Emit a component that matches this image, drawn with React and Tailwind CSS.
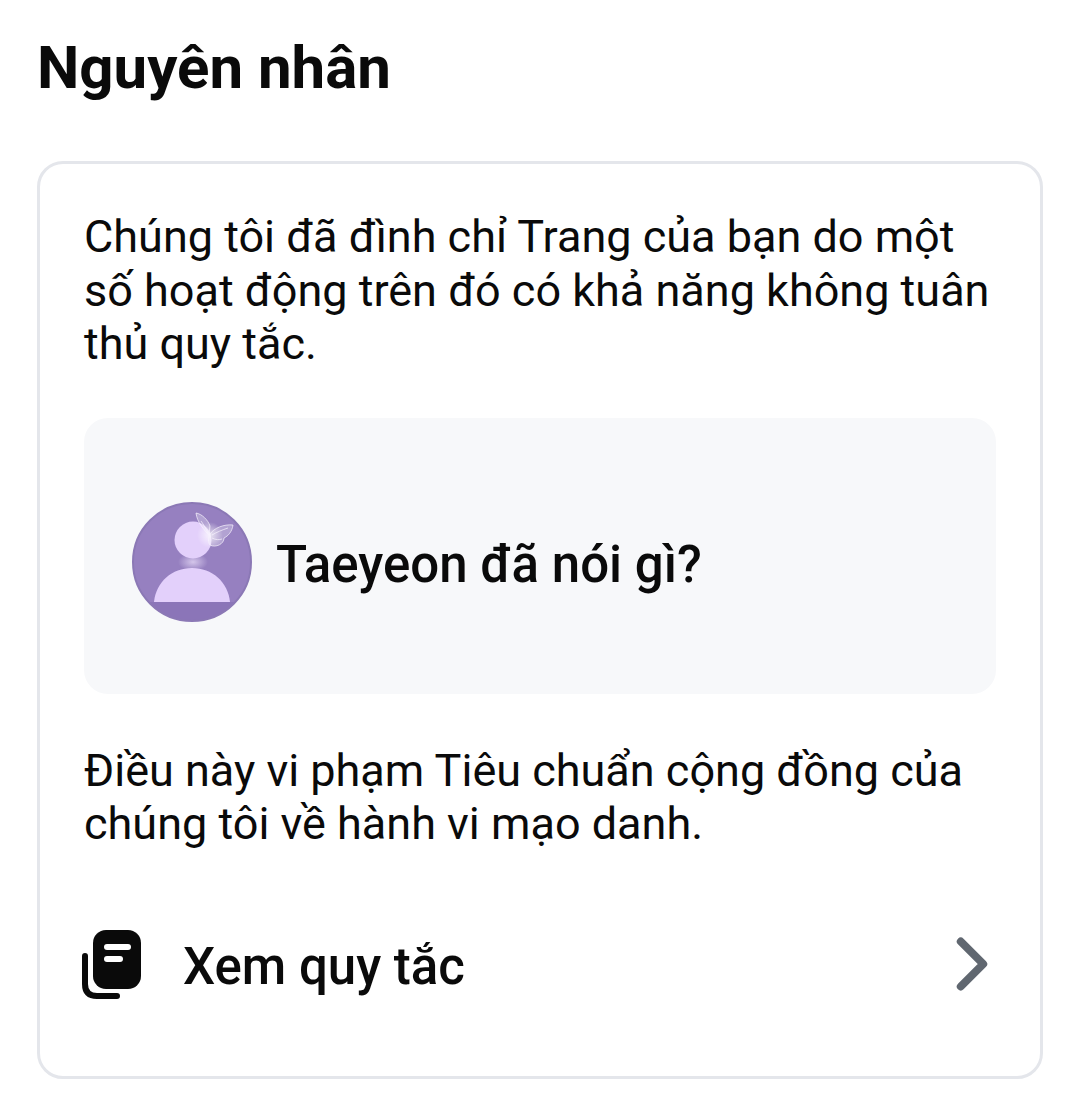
import { ChevronRight } from "lucide-react"

function Avatar() {
  return (
    <svg viewBox="0 0 120 120" className="h-[120px] w-[120px] shrink-0">
      <defs>
        <clipPath id="avatar-clip">
          <circle cx="60" cy="60" r="59" />
        </clipPath>
        <radialGradient id="neck-glow">
          <stop offset="0" stopColor="#efe4fd" stopOpacity="0.7" />
          <stop offset="1" stopColor="#efe4fd" stopOpacity="0" />
        </radialGradient>
        <radialGradient id="wing-glow">
          <stop offset="0" stopColor="#ffffff" stopOpacity="0.75" />
          <stop offset="1" stopColor="#ffffff" stopOpacity="0" />
        </radialGradient>
      </defs>
      <circle cx="60" cy="60" r="59" fill="#9680c0" />
      <g clipPath="url(#avatar-clip)">
        <rect x="0" y="100" width="120" height="20" fill="#8b75b8" />
      </g>
      <circle cx="60" cy="60" r="59" fill="none" stroke="#8b78b5" strokeWidth="2" />
      <ellipse cx="61" cy="60" rx="15" ry="9" fill="url(#neck-glow)" />
      <circle cx="61" cy="38" r="18.500" fill="#e3d0fb" />
      <path d="M22 100 C24 80 40 66 60 66 C80 66 96 80 98 100 Z" fill="#e3d0fb" />
      {/* butterfly on the head */}
      <circle cx="78" cy="33" r="13" fill="url(#wing-glow)" />
      <g fill="#f6f1fd" fillOpacity="0.3" stroke="#f8f4fe" strokeWidth="1" strokeOpacity="0.7">
        <path d="M77 33 C72 28 65 20 64 11 C70 12 76 18 78 24 Z" />
        <path d="M78 32 C82 26 92 22 101 23 C100 30 96 34 92 36 C92 42 84 46 78 43 C76 40 76 36 78 32 Z" />
        <path d="M80 33 C85 30 90 28 96 26 M80 36 C84 38 87 38 90 37 M69 19 C72 23 74 27 76 31" fill="none" />
      </g>
    </svg>
  )
}

function RulesIcon() {
  return (
    <svg viewBox="0 0 59 69" className="h-[69px] w-[59px] shrink-0 -ml-[2px]">
      <rect x="11" y="0" width="48" height="59" rx="13" fill="#0a0a0a" />
      <path d="M25 17 H46" stroke="#fff" strokeWidth="6" strokeLinecap="round" />
      <path d="M25 29 H38" stroke="#fff" strokeWidth="6" strokeLinecap="round" />
      <path d="M3 26 V54 C3 62 7 66 15 66 H35" fill="none" stroke="#0a0a0a" strokeWidth="6" strokeLinecap="round" />
    </svg>
  )
}

export default function App() {
  return (
    <main className="min-h-[1117px] w-full bg-white pl-[37px] pr-[36px] pt-[32px] font-['Roboto',sans-serif] text-[#0a0a0a]">
      <h1 className="text-[60px] font-bold leading-[72px]">Nguyên nhân</h1>

      <section className="mt-[57px] h-[918px] rounded-[26px] border-[3px] border-[#e4e6eb] px-[44px] pt-[46px]">
        <p className="text-[45px] leading-[53.5px]">
          Chúng tôi đã đình chỉ Trang của bạn do một số hoạt động trên đó có khả năng không tuân thủ quy tắc.
        </p>

        <div className="mt-[47px] flex h-[276px] items-center gap-[24px] rounded-[24px] bg-[#f7f8fa] pl-[48px] pt-[12px]">
          <Avatar />
          <span className="mt-[8px] text-[51px] font-medium">Taeyeon đã nói gì?</span>
        </div>

        <p className="mt-[50px] text-[45px] leading-[53.5px]">
          Điều này vi phạm Tiêu chuẩn cộng đồng của chúng tôi về hành vi mạo danh.
        </p>

        <div className="mt-[79px] flex h-[69px] items-center">
          <RulesIcon />
          <span className="ml-[42px] mt-[6px] text-[51px] font-medium leading-[60px]">Xem quy tắc</span>
          <ChevronRight className="ml-auto mr-[-21px] h-[90px] w-[90px] text-[#606770]" strokeWidth={2.1} />
        </div>
      </section>
    </main>
  )
}
